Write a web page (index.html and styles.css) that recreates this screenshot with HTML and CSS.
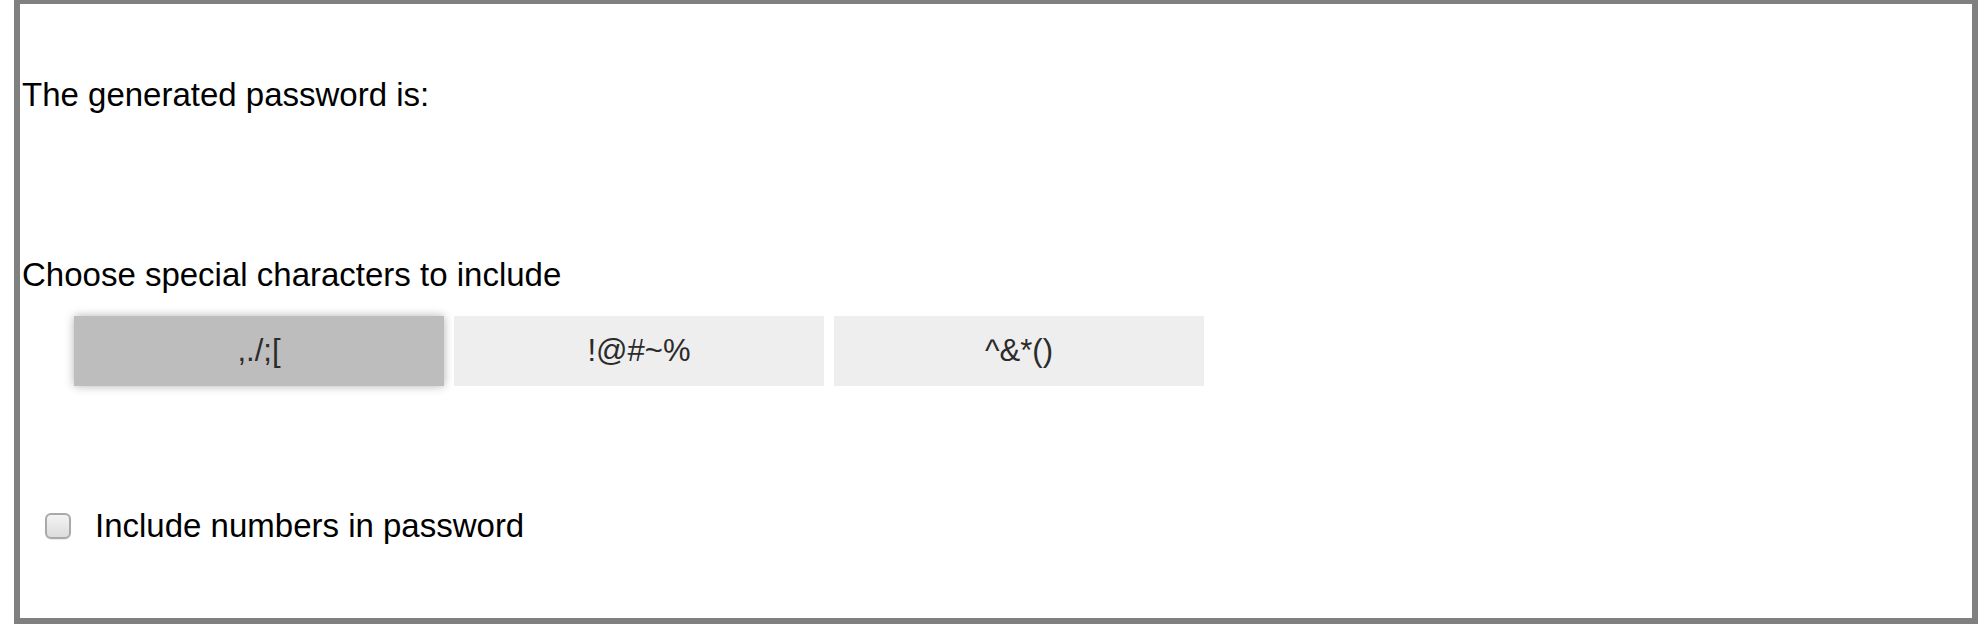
FILE: index.html
```html
<!DOCTYPE html>
<html>
<head>
<meta charset="utf-8">
<title>Password generator</title>
<link rel="stylesheet" href="styles.css">
</head>
<body>
<div class="frame">
  <p class="label label-first">The generated password is:</p>
  <div class="output"></div>
  <p class="label">Choose special characters to include</p>
  <div class="choices">
    <button class="choice choice-selected">,./;[</button>
    <button class="choice">!@#~%</button>
    <button class="choice">^&amp;*()</button>
  </div>
  <label class="option">
    <input type="checkbox" class="check">
    <span class="option-text">Include numbers in password</span>
  </label>
</div>
</body>
</html>
```
FILE: styles.css
```css
html, body {
  margin: 0;
  padding: 0;
  background: #ffffff;
}
body {
  font-family: "Liberation Sans", Arial, sans-serif;
  font-size: 33px;
  color: #000000;
}
.frame {
  box-sizing: border-box;
  margin: 0 2px 0 14px;
  height: 624px;
  border: 6px solid #808080;
  border-top-width: 4px;
  padding: 72px 0 0 2px;
  display: flex;
  flex-direction: column;
  align-items: flex-start;
}
.label {
  margin: 0;
  line-height: 37px;
  height: 37px;
}
.output {
  height: 143px;
}
.choices {
  display: flex;
  gap: 10px;
  margin-top: 23px;
  padding-left: 52px;
}
.choice {
  width: 370px;
  height: 70px;
  border: none;
  margin: 0;
  padding: 0;
  background: #eeeeee;
  font-family: "Liberation Sans", Arial, sans-serif;
  font-size: 31px;
  color: #2b2b2b;
  display: flex;
  align-items: center;
  justify-content: center;
}
.choice-selected {
  background: #bdbdbd;
  box-shadow: 0 0 9px rgba(0, 0, 0, 0.3);
}
.option {
  display: flex;
  align-items: center;
  margin-top: 121px;
  height: 37px;
  padding-left: 23px;
  line-height: 37px;
}
.check {
  -webkit-appearance: none;
  appearance: none;
  box-sizing: border-box;
  width: 26px;
  height: 26px;
  margin: 0 24px 0 0;
  border: 2px solid #a9a9a9;
  border-radius: 6px;
  background: linear-gradient(#f3f3f3, #dcdcdc);
  box-shadow: 0 1px 1px rgba(0, 0, 0, 0.08);
}
.option-text {
  display: block;
}
```
